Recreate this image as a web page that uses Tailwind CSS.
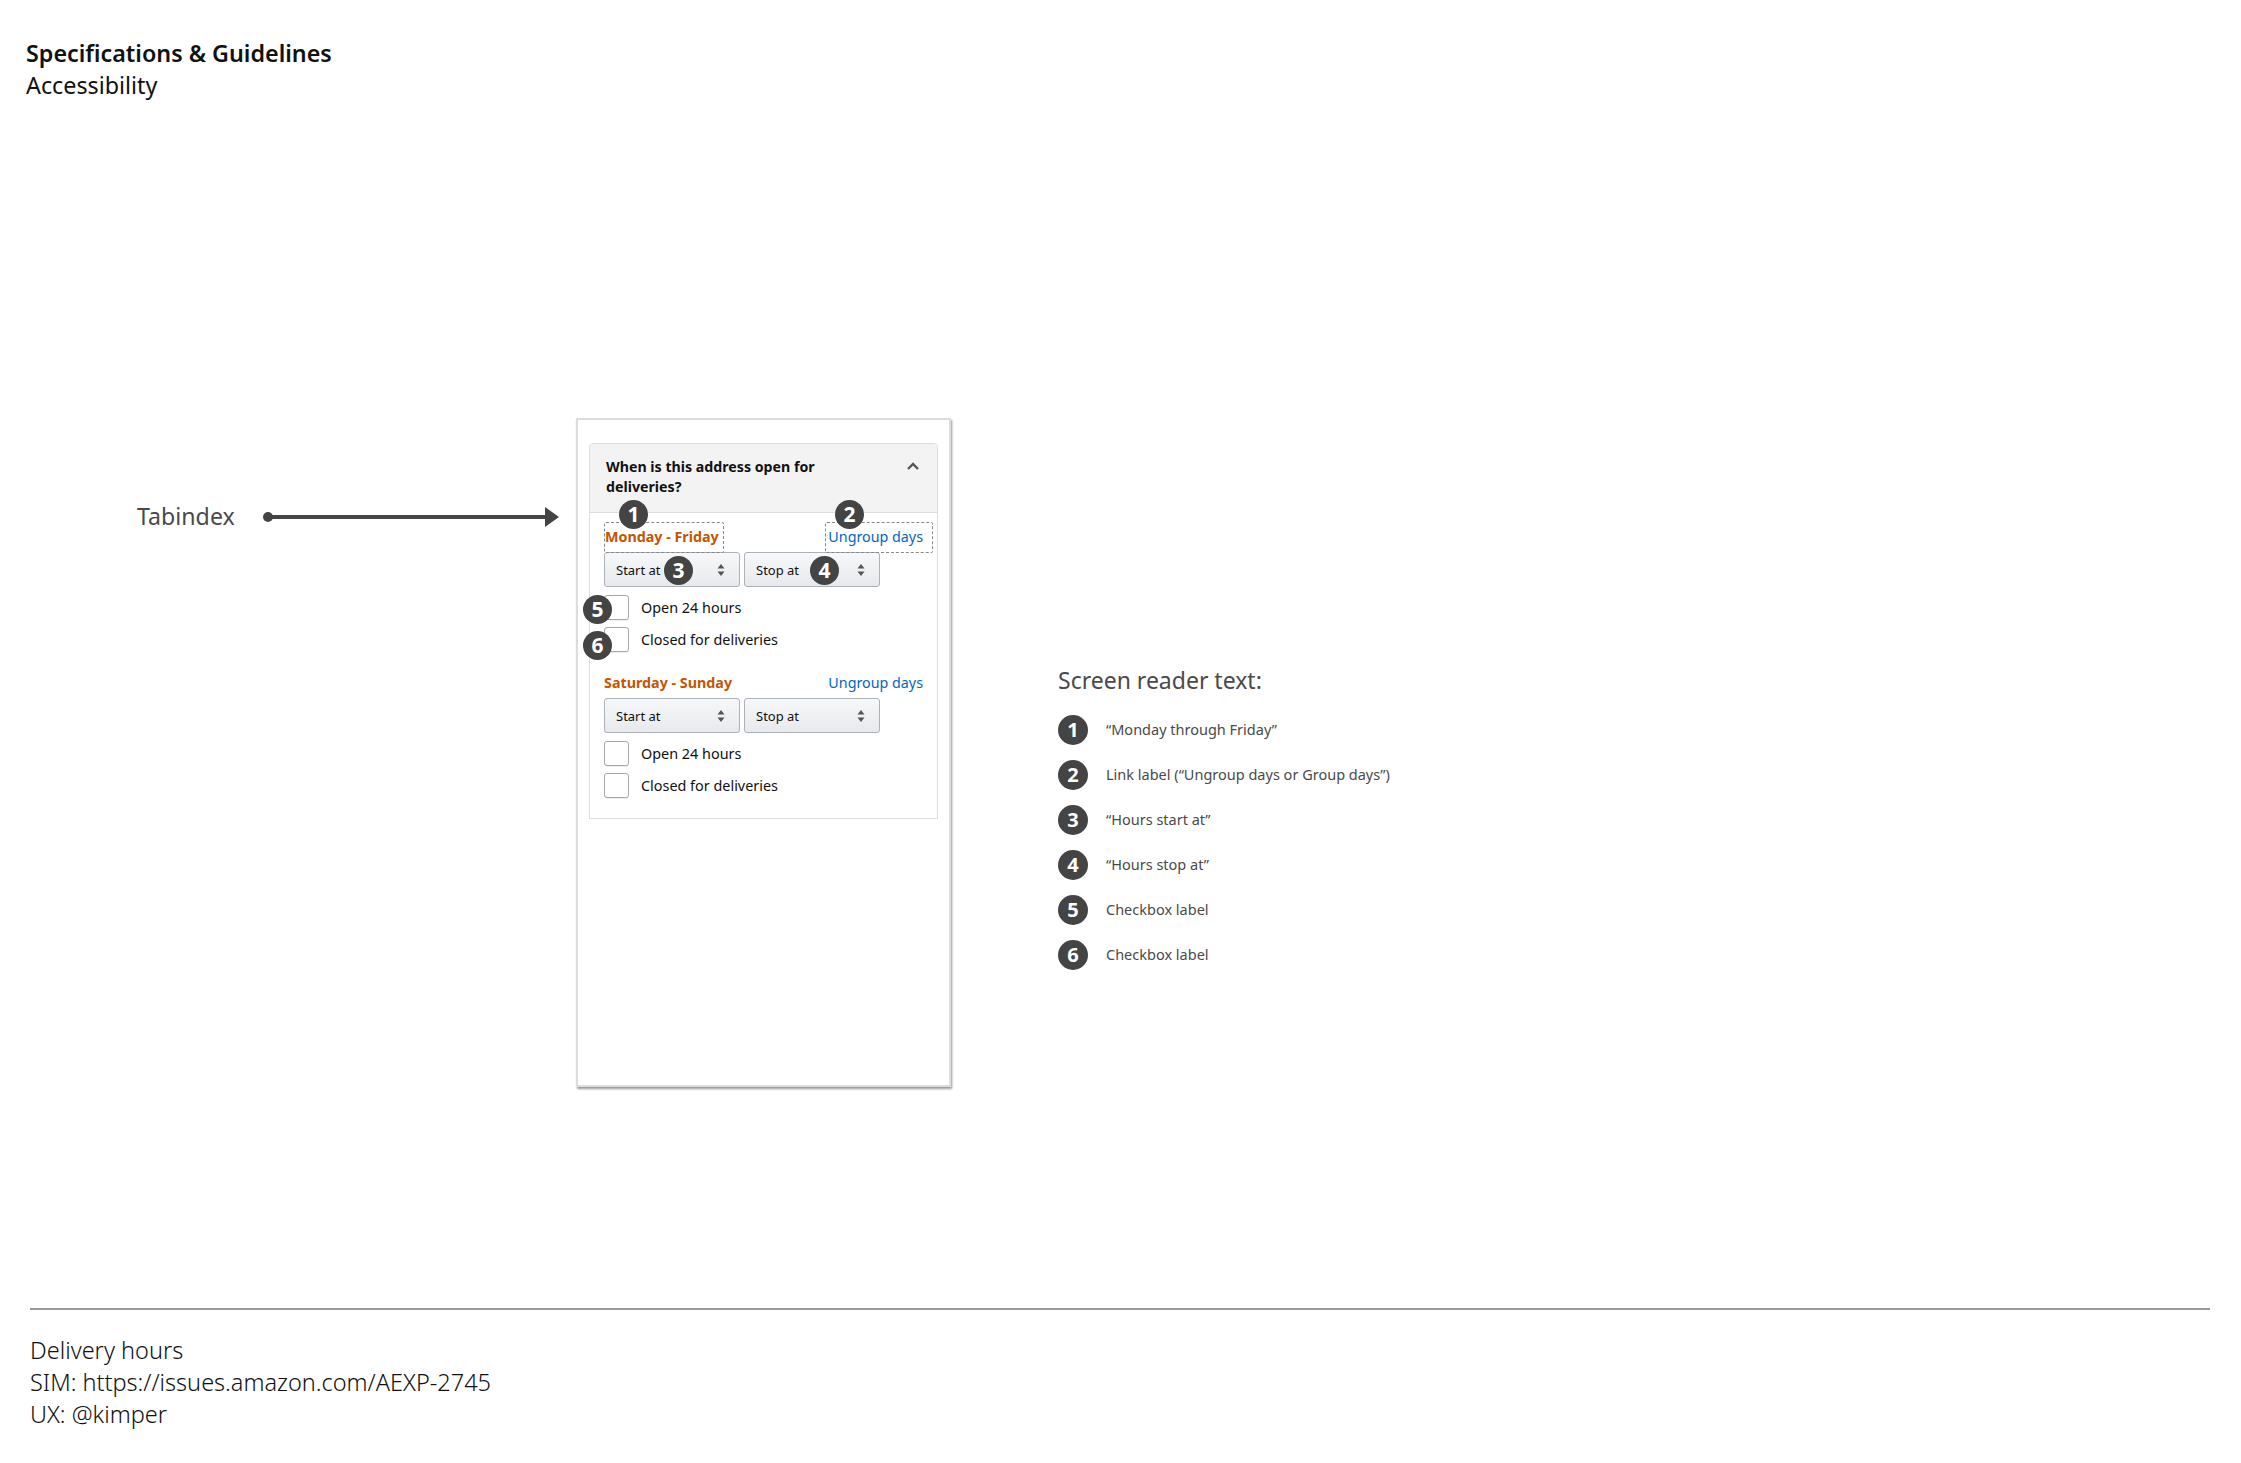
<!DOCTYPE html>
<html lang="en">
<head>
  <meta charset="UTF-8" />
  <title>Specifications &amp; Guidelines</title>
  <script src="https://cdn.jsdelivr.net/npm/@tailwindcss/browser@4"></script>
</head>
<body class="bg-white font-['Noto_Sans',sans-serif] text-[#111] overflow-hidden">
  <div class="w-[2241px] h-[1463px] flex flex-col">

    <header class="h-[418px] pl-[26px] pt-[37px] text-[23.3px] leading-[32px]">
      <div class="font-semibold">Specifications &amp; Guidelines</div>
      <div>Accessibility</div>
    </header>

    <main class="h-[670px] flex items-start">
      <!-- tabindex legend -->
      <div class="w-[576px] pl-[137px] pt-[81px] flex items-center text-[#4a4a4a]">
        <span class="w-[123px] text-[23.2px] leading-[34px]">Tabindex</span>
        <svg width="304" height="24" viewBox="0 0 304 24" class="shrink-0">
          <circle cx="8" cy="13" r="5" fill="#444" />
          <rect x="8" y="11" width="286" height="4" fill="#444" />
          <path d="M285 3 L299 13 L285 23 Z" fill="#444" />
        </svg>
      </div>

      <!-- phone -->
      <div class="relative w-[375px] h-[669px] bg-white border-2 border-[#ddd] shadow-[1px_2px_2px_rgba(0,0,0,0.4)] pt-[23px] px-[11px]">
        <section class="rounded-t-[4px] border border-[#ddd] h-[376px]">
          <div class="h-[69px] bg-[#f3f3f3] border-b border-[#ddd] rounded-t-[4px] pl-[16px] pr-[16px] pt-[13px] flex justify-between">
            <div class="w-[250px] text-[14.2px] leading-[20px] font-bold">When is this address open for deliveries?</div>
            <svg width="14" height="10" viewBox="0 0 14 10" class="mt-[4px] mr-[1px]">
              <path d="M2 8 L7 3 L12 8" fill="none" stroke="#555" stroke-width="2.4" />
            </svg>
          </div>

          <div class="pl-[14px] pr-[14px] pt-[14px]">
            <div class="flex justify-between text-[14.3px] leading-[20px]">
              <span class="font-bold text-[#c45500] pl-[1px]">Monday - Friday</span>
              <span class="text-[#0066c0]">Ungroup days</span>
            </div>
            <div class="mt-[5px] flex gap-[4px]">
              <div class="w-[136px] h-[35px] pl-[11px] pr-[14px] flex items-center justify-between rounded-[3px] border border-[#adb1b8] bg-gradient-to-b from-[#f7f8fa] to-[#e7e9ec] text-[13px]">
                <span class="pt-[2px]">Start at</span>
                <svg width="8" height="14" viewBox="0 0 8 14"><path d="M4 1 L7.5 5.5 H0.5 Z M4 13 L7.5 8.5 H0.5 Z" fill="#555" /></svg>
              </div>
              <div class="w-[136px] h-[35px] pl-[11px] pr-[14px] flex items-center justify-between rounded-[3px] border border-[#adb1b8] bg-gradient-to-b from-[#f7f8fa] to-[#e7e9ec] text-[13px]">
                <span class="pt-[2px]">Stop at</span>
                <svg width="8" height="14" viewBox="0 0 8 14"><path d="M4 1 L7.5 5.5 H0.5 Z M4 13 L7.5 8.5 H0.5 Z" fill="#555" /></svg>
              </div>
            </div>
            <div class="mt-[8px] flex items-center gap-[12px] h-[25px] text-[14.4px]">
              <span class="w-[25px] h-[25px] rounded-[3px] border border-[#a6a6a6] bg-white shadow-[0_1px_0_rgba(0,0,0,0.06)]"></span>
              <span>Open 24 hours</span>
            </div>
            <div class="mt-[7px] flex items-center gap-[12px] h-[25px] text-[14.4px]">
              <span class="w-[25px] h-[25px] rounded-[3px] border border-[#a6a6a6] bg-white shadow-[0_1px_0_rgba(0,0,0,0.06)]"></span>
              <span>Closed for deliveries</span>
            </div>

            <div class="mt-[21px] flex justify-between text-[14.3px] leading-[20px]">
              <span class="font-bold text-[#c45500]">Saturday - Sunday</span>
              <span class="text-[#0066c0]">Ungroup days</span>
            </div>
            <div class="mt-[5px] flex gap-[4px]">
              <div class="w-[136px] h-[35px] pl-[11px] pr-[14px] flex items-center justify-between rounded-[3px] border border-[#adb1b8] bg-gradient-to-b from-[#f7f8fa] to-[#e7e9ec] text-[13px]">
                <span class="pt-[2px]">Start at</span>
                <svg width="8" height="14" viewBox="0 0 8 14"><path d="M4 1 L7.5 5.5 H0.5 Z M4 13 L7.5 8.5 H0.5 Z" fill="#555" /></svg>
              </div>
              <div class="w-[136px] h-[35px] pl-[11px] pr-[14px] flex items-center justify-between rounded-[3px] border border-[#adb1b8] bg-gradient-to-b from-[#f7f8fa] to-[#e7e9ec] text-[13px]">
                <span class="pt-[2px]">Stop at</span>
                <svg width="8" height="14" viewBox="0 0 8 14"><path d="M4 1 L7.5 5.5 H0.5 Z M4 13 L7.5 8.5 H0.5 Z" fill="#555" /></svg>
              </div>
            </div>
            <div class="mt-[8px] flex items-center gap-[12px] h-[25px] text-[14.4px]">
              <span class="w-[25px] h-[25px] rounded-[3px] border border-[#a6a6a6] bg-white shadow-[0_1px_0_rgba(0,0,0,0.06)]"></span>
              <span>Open 24 hours</span>
            </div>
            <div class="mt-[7px] flex items-center gap-[12px] h-[25px] text-[14.4px]">
              <span class="w-[25px] h-[25px] rounded-[3px] border border-[#a6a6a6] bg-white shadow-[0_1px_0_rgba(0,0,0,0.06)]"></span>
              <span>Closed for deliveries</span>
            </div>
          </div>
        </section>

        <!-- focus outlines and numbered markers lying over the form -->
        <div class="absolute left-[26px] top-[102px] w-[120px] h-[31px] border border-dashed border-[#888] rounded-[2px]"></div>
        <div class="absolute left-[247px] top-[102px] w-[108px] h-[31px] border border-dashed border-[#888] rounded-[2px]"></div>
        <span class="absolute left-[41px] top-[80px] w-[29px] h-[29px] rounded-full bg-[#444] text-white text-[21px] font-bold flex items-center justify-center">1</span>
        <span class="absolute left-[257px] top-[80px] w-[29px] h-[29px] rounded-full bg-[#444] text-white text-[21px] font-bold flex items-center justify-center">2</span>
        <span class="absolute left-[86px] top-[136px] w-[29px] h-[29px] rounded-full bg-[#444] text-white text-[21px] font-bold flex items-center justify-center">3</span>
        <span class="absolute left-[232px] top-[136px] w-[29px] h-[29px] rounded-full bg-[#444] text-white text-[21px] font-bold flex items-center justify-center">4</span>
        <span class="absolute left-[5px] top-[175px] w-[29px] h-[29px] rounded-full bg-[#444] text-white text-[21px] font-bold flex items-center justify-center">5</span>
        <span class="absolute left-[5px] top-[211px] w-[29px] h-[29px] rounded-full bg-[#444] text-white text-[21px] font-bold flex items-center justify-center">6</span>
      </div>

      <!-- screen reader legend -->
      <div class="pl-[107px] pt-[245px] text-[#4a4a4a]">
        <h2 class="text-[23px] leading-[34px]">Screen reader text:</h2>
        <ul class="mt-[18px] flex flex-col gap-[15px] text-[14.5px]">
          <li class="flex items-center gap-[18px] h-[30px]"><span class="w-[30px] h-[30px] rounded-full bg-[#444] text-white text-[20px] font-bold flex items-center justify-center">1</span>“Monday through Friday”</li>
          <li class="flex items-center gap-[18px] h-[30px]"><span class="w-[30px] h-[30px] rounded-full bg-[#444] text-white text-[20px] font-bold flex items-center justify-center">2</span>Link label (“Ungroup days or Group days”)</li>
          <li class="flex items-center gap-[18px] h-[30px]"><span class="w-[30px] h-[30px] rounded-full bg-[#444] text-white text-[20px] font-bold flex items-center justify-center">3</span>“Hours start at”</li>
          <li class="flex items-center gap-[18px] h-[30px]"><span class="w-[30px] h-[30px] rounded-full bg-[#444] text-white text-[20px] font-bold flex items-center justify-center">4</span>“Hours stop at”</li>
          <li class="flex items-center gap-[18px] h-[30px]"><span class="w-[30px] h-[30px] rounded-full bg-[#444] text-white text-[20px] font-bold flex items-center justify-center">5</span>Checkbox label</li>
          <li class="flex items-center gap-[18px] h-[30px]"><span class="w-[30px] h-[30px] rounded-full bg-[#444] text-white text-[20px] font-bold flex items-center justify-center">6</span>Checkbox label</li>
        </ul>
      </div>
    </main>

    <footer class="mt-[220px] ml-[30px] w-[2180px] border-t-2 border-[#999] pt-[24px] text-[23.5px] leading-[32px] font-light">
      <div>Delivery hours</div>
      <div>SIM: https://issues.amazon.com/AEXP-2745</div>
      <div>UX: @kimper</div>
    </footer>
  </div>
</body>
</html>
